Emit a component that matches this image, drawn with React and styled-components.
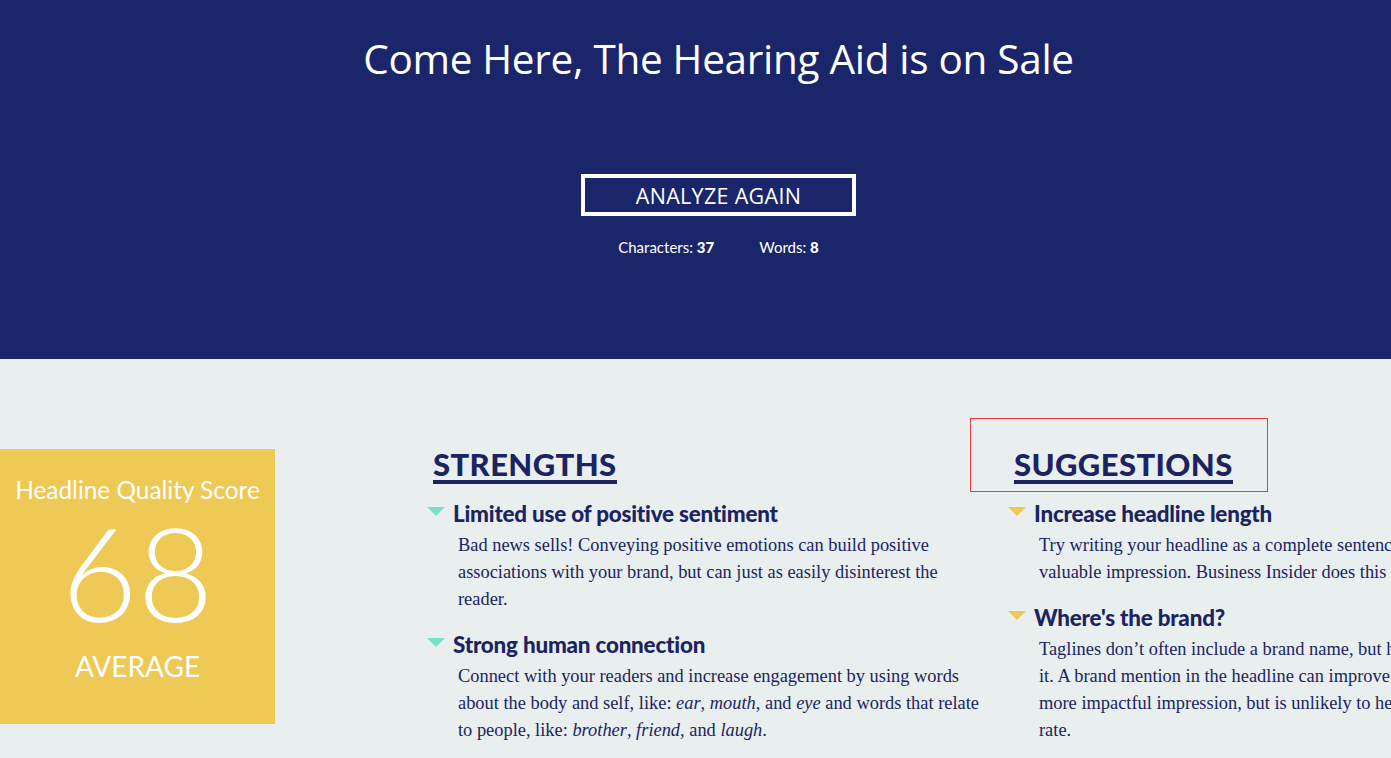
import React from 'react';
import styled, { createGlobalStyle } from 'styled-components';

const GlobalStyle = createGlobalStyle`
  html, body { margin:0; padding:0; }
  body { background:#e9efef; overflow:hidden; font-family:"Open Sans", sans-serif; }
`;

const navy = '#1a2669';
const ink = '#1b2461';

const Page = styled.div`
  width:1437px;
`;
const Hero = styled.header`
  background:${navy}; height:359px; box-sizing:border-box;
  display:flex; flex-direction:column; align-items:center;
  padding-top:31px; color:#fff;
`;
const Headline = styled.h1`
  margin:0; font-family:"Open Sans", sans-serif; font-weight:400; font-size:40.5px; line-height:56px;
  letter-spacing:-0.3px;
`;
const AgainButton = styled.button`
  margin-top:87px; width:275px; height:42px; box-sizing:border-box;
  background:transparent; border:4px solid #fff; color:#fff; padding:0;
  font-family:"Open Sans", sans-serif; font-size:21.5px; letter-spacing:0.3px; cursor:pointer;
`;
const Stats = styled.div`
  margin-top:22px; display:flex; gap:45px; font-family:"Lato", sans-serif; font-size:15px;
  b { font-weight:900; }
`;

const Main = styled.main`
  display:flex; align-items:flex-start; padding-top:90px;
`;
const ScoreCard = styled.div`
  flex:0 0 275px; height:275px; background:#efc956; color:#fff;
  display:flex; flex-direction:column; align-items:center; font-family:"Lato", sans-serif;
  padding-top:26px; box-sizing:border-box;
`;
const ScoreLabel = styled.div`font-size:24.4px; line-height:30px;`;
const ScoreValue = styled.div`font-size:131px; font-weight:300; line-height:126px; margin-top:4px;`;
const ScoreGrade = styled.div`font-size:28px; line-height:34px; margin-top:14px;`;

const Columns = styled.div`
  flex:none; display:flex; margin-left:152px;
`;
const Column = styled.section`
  flex:none; width:${p => p.$width}px;
`;
const HeadingWrap = styled.div`
  position:relative; padding-left:6px;
`;
const Heading = styled.h2`
  display:inline-block; margin:0; font-family:"Lato", sans-serif; font-weight:900;
  font-size:31px; line-height:31px; color:${ink}; letter-spacing:0.4px;
  border-bottom:4px solid ${ink};
`;
const Marker = styled.div`
  position:absolute; left:-38px; top:-31px; width:298px; height:74px;
  border:1px solid #f0393b; box-sizing:border-box; pointer-events:none;
`;
const Item = styled.div`
  margin-top:15px;
  & + & { margin-top:17px; }
`;
const ItemTitle = styled.h3`
  display:flex; align-items:center; gap:8px; margin:0;
  font-family:"Lato", sans-serif; font-weight:900; font-size:22.4px; line-height:30px; color:${ink};
  letter-spacing:-0.2px;
`;
const Arrow = styled.span`
  width:0; height:0; border-left:9px solid transparent; border-right:9px solid transparent;
  border-top:9px solid ${p => p.$color}; margin-top:-5px;
`;
const ItemBody = styled.p`
  margin:3px 0 0 31px; font-family:"Liberation Serif", serif; font-size:18.4px; line-height:27px;
  color:${ink}; width:525px; white-space:${p => p.$nowrap ? 'nowrap' : 'normal'};
`;

const strengths = [
  {
    title: 'Limited use of positive sentiment',
    body: <>Bad news sells! Conveying positive emotions can build positive associations with your brand, but can just as easily disinterest the reader.</>,
  },
  {
    title: 'Strong human connection',
    body: <>Connect with your readers and increase engagement by using words about the body and self, like: <i>ear</i>, <i>mouth</i>, and <i>eye</i> and words that relate to people, like: <i>brother</i>, <i>friend</i>, and <i>laugh</i>.</>,
  },
];

const suggestions = [
  {
    title: 'Increase headline length',
    body: <>Try writing your headline as a complete sentence to create a more<br />valuable impression. Business Insider does this well.</>,
  },
  {
    title: "Where's the brand?",
    body: <>Taglines don’t often include a brand name, but headlines should include<br />it. A brand mention in the headline can improve recall and leave a<br />more impactful impression, but is unlikely to help your click-through<br />rate.</>,
  },
];

function Group({ title, items, color, marked, nowrap, width }) {
  return (
    <Column $width={width}>
      <HeadingWrap>
        <Heading>{title}</Heading>
        {marked && <Marker />}
      </HeadingWrap>
      {items.map(it => (
        <Item key={it.title}>
          <ItemTitle><Arrow $color={color} />{it.title}</ItemTitle>
          <ItemBody $nowrap={nowrap}>{it.body}</ItemBody>
        </Item>
      ))}
    </Column>
  );
}

export default function App() {
  return (
    <Page>
      <GlobalStyle />
      <Hero>
        <Headline>Come Here, The Hearing Aid is on Sale</Headline>
        <AgainButton>ANALYZE AGAIN</AgainButton>
        <Stats>
          <span>Characters: <b>37</b></span>
          <span>Words: <b>8</b></span>
        </Stats>
      </Hero>
      <Main>
        <ScoreCard>
          <ScoreLabel>Headline Quality Score</ScoreLabel>
          <ScoreValue>68</ScoreValue>
          <ScoreGrade>AVERAGE</ScoreGrade>
        </ScoreCard>
        <Columns>
          <Group title="STRENGTHS" items={strengths} color="#7adfc6" width={581} />
          <Group title="SUGGESTIONS" items={suggestions} color="#efc956" marked nowrap width={560} />
        </Columns>
      </Main>
    </Page>
  );
}
